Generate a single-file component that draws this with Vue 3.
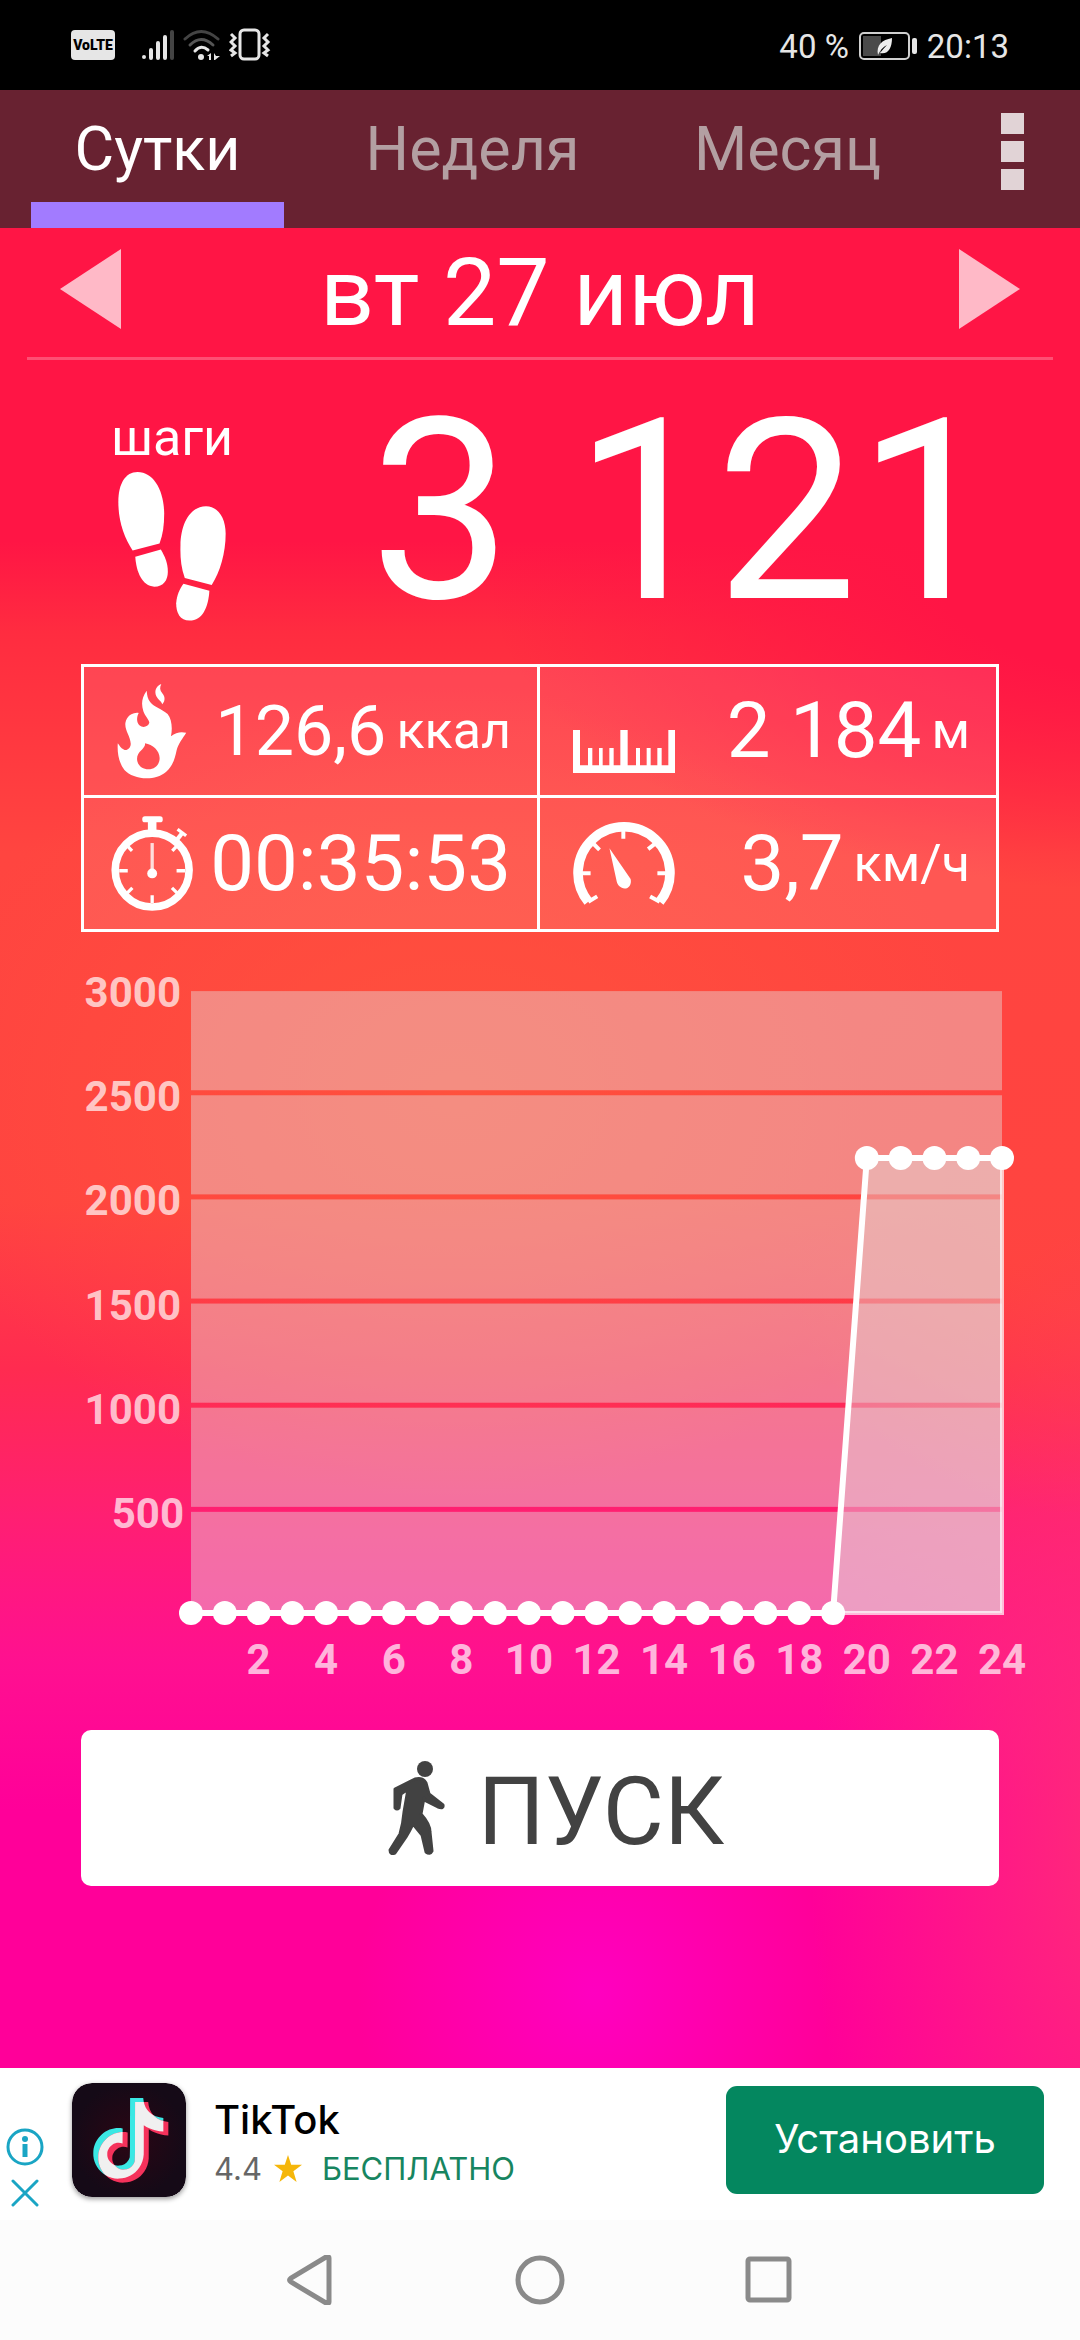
<script setup>
import { ref, computed } from 'vue'

const tabs = ['Сутки', 'Неделя', 'Месяц']
const active = ref(0)

const base = 681
const left = 191
const stepX = 811 / 24
const yOf = (v) => base - v * 0.2083
const xOf = (h) => left + h * stepX

const hours = Array.from({ length: 25 }, (_, h) => ({ h, v: h < 20 ? 0 : 2184 }))
const points = computed(() => hours.map((p) => ({ x: xOf(p.h), y: yOf(p.v) })))
const line = computed(() => points.value.map((p) => `${p.x},${p.y}`).join(' '))
const area = computed(() => `${xOf(19)},${base} ${points.value.slice(20).map((p) => `${p.x},${p.y}`).join(' ')} ${xOf(24)},${base}`)
const bands = [0, 500, 1000, 1500, 2000, 2500].map((v) => {
  const top = yOf(v + 500) + 3
  const bottom = v === 0 ? base : yOf(v) - 2
  return { v, top, height: bottom - top }
})
const yLabels = [500, 1000, 1500, 2000, 2500, 3000]
const xLabels = Array.from({ length: 12 }, (_, i) => (i + 1) * 2)
</script>

<template>
  <div class="phone">
    <div class="status">
      <div class="status-left">
        <span class="volte">VoLTE</span>
        <svg class="signal" viewBox="0 0 34 32" width="34" height="32">
          <g stroke="#e6e6e6" stroke-width="4" stroke-linecap="round">
            <path d="M3 28v0M10 21v8M17 14v15M24 8v21" />
            <path d="M31 3v26" stroke="#444" />
          </g>
        </svg>
        <svg class="wifi" viewBox="0 0 38 32" width="38" height="32">
          <g fill="none" stroke-width="3" stroke-linecap="round">
            <path d="M2 10Q18 -5 35 10" stroke="#444" />
            <path d="M7 16Q18 5 30 16" stroke="#555" />
            <path d="M12 22Q18 15 25 21" stroke="#e6e6e6" />
          </g>
          <circle cx="18" cy="28" r="3" fill="#e6e6e6" />
          <path d="M28 24v7h-2v-4h-2zM31 31v-7l2 3h4l-5 4z" fill="#e6e6e6" />
        </svg>
        <svg class="vibrate" viewBox="0 0 42 34" width="42" height="34">
          <g fill="none" stroke="#e6e6e6" stroke-width="3">
            <rect x="11" y="2" width="19" height="29" rx="4" />
            <path d="M2 6l4 4-4 4 4 4-4 4 4 3-4 3M39 6l-4 4 4 4-4 4 4 4-4 3 4 3" />
          </g>
        </svg>
      </div>
      <div class="status-right">
        <span>40 %</span>
        <svg viewBox="0 0 58 28" width="58" height="28">
          <rect x="1" y="1" width="49" height="26" rx="4" fill="none" stroke="#d0d0d0" stroke-width="2" />
          <rect x="4" y="4" width="18" height="20" fill="#4a4a4a" />
          <path d="M19 23C17 13 23 8 33 6C33 16 29 23 21 21Q25 16 28 13Q22 16 19 23Z" fill="#eee" />
          <rect x="53" y="6" width="5" height="16" rx="2" fill="#e6e6e6" />
        </svg>
        <span>20:13</span>
      </div>
    </div>

    <header class="bar">
      <nav class="tabs">
        <button v-for="(t, i) in tabs" :key="t" class="tab" :class="{ on: active === i }" @click="active = i">{{ t }}</button>
      </nav>
      <button class="menu" aria-label="Меню"><i></i><i></i><i></i></button>
    </header>

    <main class="body">
      <div class="date">
        <button class="arrow" aria-label="Назад"><svg viewBox="0 0 61 80" width="61" height="80"><path d="M61 0V80L0 40Z" /></svg></button>
        <h1>вт 27 июл</h1>
        <button class="arrow" aria-label="Вперёд"><svg viewBox="0 0 61 80" width="61" height="80"><path d="M0 0V80L61 40Z" /></svg></button>
      </div>

      <section class="steps">
        <div class="steps-label">
          <span>шаги</span>
          <svg viewBox="173 275 325 448" width="108" height="149" fill="#fff">
            <path d="M232 275C195 275 174 310 174 365C174 420 190 470 217 511L298 490C308 465 312 435 312 400C311 330 280 275 232 275Z" />
            <path d="M225 530L302 508C315 530 323 550 323 575C323 600 310 620 282 620C245 618 228 575 225 530Z" />
            <path d="M438 378C475 378 497 415 497 460C497 520 480 575 455 615L374 594C362 560 360 530 361 495C362 430 390 378 438 378Z" />
            <path d="M370 611L448 632C445 680 428 722 388 722C360 722 348 700 348 670C350 645 358 628 370 611Z" />
          </svg>
        </div>
        <strong class="count">3 121</strong>
      </section>

      <section class="stats">
        <div class="cell">
          <svg viewBox="180 105 206 286" width="84" height="95" fill="#fff">
            <path fill-rule="evenodd" d="M267 125C252 145 250 165 257 187C262 202 275 213 275 222C272 234 255 238 246 230C236 222 236 205 243 192C225 190 207 200 203 222C200 245 218 262 219 285C219 300 205 308 198 302C188 298 186 290 180 283C178 310 182 340 200 364C225 392 290 400 325 370C345 352 352 330 357 305C362 285 375 270 386 252C372 248 355 250 340 262C345 240 343 210 330 195C312 180 290 175 278 160C270 150 268 138 267 125ZM262 283C265 300 238 306 238 330C238 350 255 362 272 362C292 362 306 348 306 328C306 305 285 287 262 283Z" />
            <path d="M311 105C292 112 288 132 300 148C306 155 312 160 314 166C324 155 322 142 314 133C306 124 306 115 311 105Z" />
          </svg>
          <p><b class="mid">126,6</b><small>ккал</small></p>
        </div>
        <div class="cell wide">
          <svg viewBox="129 240 306 129" width="102" height="43" fill="#fff" class="ruler">
            <path d="M129 240H150V346H174V294H187V346H207V294H218V346H238V294H251V346H271V240H293V346H318V294H330V346H350V294H362V346H382V294H395V346H415V240H435V369H129Z" />
          </svg>
          <p><b>2 184</b><small>м</small></p>
        </div>
        <div class="cell">
          <svg viewBox="151 500 249 288" width="84" height="95" fill="none" stroke="#fff">
            <circle cx="276" cy="664" r="112" stroke-width="23" />
            <rect x="246" y="501" width="62" height="18" rx="8" fill="#fff" stroke="none" />
            <path d="M276 510V555" stroke-width="26" />
            <path d="M345 580L366 553" stroke-width="13" />
            <path d="M353 540L379 560" stroke-width="10" />
            <path d="M176 666H202M350 666H376M276 740V764M200 590L215 606M352 590L337 606M200 734L216 718M352 734L336 718" stroke-width="10" />
            <path d="M276 582V665" stroke-width="10" opacity=".8" />
            <circle cx="276" cy="674" r="15" fill="#fff" stroke="none" />
          </svg>
          <p><b>00:35:53</b></p>
        </div>
        <div class="cell wide">
          <svg viewBox="128 516 308 254" width="102" height="84" fill="none" stroke="#fff">
            <path d="M174 757A139 139 0 1 1 390 757" stroke-width="29" />
            <path d="M153 671H181M383 671H410M280 540V567M186 578L208 600M378 580L355 598M174 757L201 741M390 757L361 741" stroke-width="12" />
            <path d="M238 595L302 688C306 705 296 717 284 717C272 717 262 706 260 696Z" fill="#fff" stroke="none" />
          </svg>
          <p><b>3,7</b><small>км/ч</small></p>
        </div>
      </section>

      <svg class="chart" viewBox="0 0 1080 798">
        <rect v-for="b in bands" :key="b.v" :x="left" :y="b.top" width="811" :height="b.height" class="fill" />
        <polygon :points="area" class="fill" />
        <path :d="`M${xOf(24)} ${yOf(2184)}V${base}H${xOf(19)}`" class="edge" />
        <polyline :points="line" class="line" />
        <circle v-for="(p, i) in points" :key="i" :cx="p.x" :cy="p.y" r="12" fill="#fff" />
        <text v-for="v in yLabels" :key="'y' + v" :x="v === 500 ? 184 : 181" :y="yOf(v) + 19" text-anchor="end">{{ v }}</text>
        <text v-for="h in xLabels" :key="'x' + h" :x="xOf(h)" y="742" text-anchor="middle">{{ h }}</text>
      </svg>

      <button class="start">
        <svg viewBox="328 61 58 95" width="58" height="95" fill="#424242" stroke="#424242" stroke-linejoin="round">
          <circle cx="365" cy="69" r="8" stroke="none" />
          <path stroke-width="3" d="M355 79Q363 77 366 83L369 94L383 105Q384 109 378 107L366 101L364 98L361 114Q370 124 370 132L372 151Q370 155 366 152L362 135L353 124Q349 132 346 137L335 153Q330 155 330 150L340 134Q343 124 344 112L348 89L341 94L339 108Q337 110 335 108L335 89Z" />
        </svg>
        <span>ПУСК</span>
      </button>
    </main>

    <aside class="ad">
      <div class="ad-marks">
        <svg viewBox="0 0 38 38" width="38" height="38"><circle cx="19" cy="19" r="17" fill="none" stroke="#1aa5c4" stroke-width="3" /><circle cx="19" cy="11" r="3" fill="#1aa5c4" /><path d="M19 16V29" stroke="#1aa5c4" stroke-width="5" /></svg>
        <svg viewBox="0 0 28 28" width="28" height="28"><path d="M2 2L26 26M26 2L2 26" stroke="#1aa5c4" stroke-width="3" stroke-linecap="round" /></svg>
      </div>
      <svg class="app-icon" viewBox="0 0 114 114" width="114" height="114">
        <defs>
          <radialGradient id="g"><stop offset="0" stop-color="#2b0614" /><stop offset="1" stop-color="#150a17" /></radialGradient>
          <path id="note" d="M12.525.02c1.31-.02 2.61-.01 3.91-.02.08 1.53.63 3.09 1.75 4.17 1.12 1.11 2.7 1.62 4.24 1.79v4.03c-1.44-.05-2.89-.35-4.2-.97-.57-.26-1.1-.59-1.62-.93-.01 2.92.01 5.84-.02 8.75-.08 1.4-.54 2.79-1.35 3.94-1.31 1.92-3.58 3.17-5.91 3.21-1.43.08-2.86-.31-4.08-1.03-2.02-1.19-3.44-3.37-3.65-5.71-.02-.5-.03-1-.01-1.49.18-1.9 1.12-3.72 2.58-4.96 1.66-1.44 3.98-2.13 6.15-1.72.02 1.48-.04 2.96-.04 4.44-.99-.32-2.15-.23-3.02.37-.63.41-1.11 1.04-1.36 1.75-.21.51-.15 1.07-.14 1.61.24 1.64 1.82 3.02 3.5 2.87 1.12-.01 2.19-.66 2.77-1.61.19-.33.4-.67.41-1.06.1-1.79.06-3.57.07-5.36.01-4.03-.01-8.05.02-12.07z" />
          <clipPath id="overlap"><use href="#note" transform="translate(21 19) scale(3.36)" /></clipPath>
        </defs>
        <rect width="114" height="114" rx="20" fill="url(#g)" />
        <use href="#note" transform="translate(16 15) scale(3.36)" fill="#3be8e4" />
        <use href="#note" transform="translate(21 19) scale(3.36)" fill="#f5325b" />
        <g clip-path="url(#overlap)"><use href="#note" transform="translate(16 15) scale(3.36)" fill="#f0f0f0" /></g>
      </svg>
      <div class="ad-text">
        <span class="ad-title">TikTok</span>
        <span class="ad-sub">
          <span>4.4</span>
          <svg viewBox="0 0 26 26" width="28" height="28"><path d="M13 0L16 9H26L18 15L21 25L13 19L5 25L8 15L0 9H10Z" fill="#f5b60a" /></svg>
          <em>БЕСПЛАТНО</em>
        </span>
      </div>
      <a class="install" href="#">Установить</a>
    </aside>

    <nav class="sysnav">
      <button aria-label="Назад"><svg viewBox="0 0 50 50" width="50" height="50"><path d="M43 3V47Q43 49 40 48L5 27Q2 25 5 23L40 2Q43 1 43 3Z" /></svg></button>
      <button aria-label="Домой"><svg viewBox="0 0 50 50" width="50" height="50"><circle cx="25" cy="25" r="22" /></svg></button>
      <button aria-label="Обзор"><svg viewBox="0 0 50 50" width="50" height="50"><rect x="4" y="4" width="41" height="41" rx="2" /></svg></button>
    </nav>
  </div>
</template>

<style>
body {
  margin: 0;
  background: #fcfcfc;
}
</style>

<style scoped>
.phone {
  min-height: 100vh;
  display: flex;
  flex-direction: column;
  font-family: Roboto, "Noto Sans", sans-serif;
  color: #fff;
}
button {
  border: 0;
  padding: 0;
  margin: 0;
  background: none;
  font: inherit;
  color: inherit;
}
svg {
  flex: none;
}
.status {
  height: 90px;
  background: #000;
  display: flex;
  justify-content: space-between;
  align-items: center;
  padding: 0 71px;
  color: #e6e6e6;
}
.status-left,
.status-right {
  display: flex;
  align-items: center;
}
.status-right {
  gap: 10px;
  padding-top: 2px;
  font-size: 33px;
}
.volte {
  width: 44px;
  line-height: 30px;
  border-radius: 4px;
  background: #e6e6e6;
  color: #000;
  font-size: 14px;
  font-weight: 900;
  text-align: center;
  margin-right: 26px;
}
.wifi {
  margin: 0 8px;
}
.bar {
  height: 138px;
  background: #682231;
  display: flex;
}
.tabs {
  flex: 7;
  display: grid;
  grid-template-columns: repeat(3, 1fr);
}
.tab {
  box-sizing: border-box;
  height: 138px;
  margin: 0 31px;
  padding-top: 6px;
  border-bottom: 26px solid transparent;
  font-size: 61px;
  line-height: 106px;
  color: #b39fa2;
}
.tab.on {
  color: #fff;
  border-bottom-color: #a27bff;
}
.menu {
  flex: 1;
  display: flex;
  flex-direction: column;
  align-items: center;
  gap: 7px;
  padding-top: 23px;
}
.menu i {
  width: 23px;
  height: 21px;
  background: #e1d3d6;
}
.body {
  flex: 1;
  display: flex;
  flex-direction: column;
  background:
    radial-gradient(ellipse 22% 13% at 55% 96%, rgba(255, 0, 196, 0.9) 0%, rgba(255, 0, 170, 0) 100%),
    radial-gradient(ellipse 30% 34% at 105% 88%, rgba(255, 50, 115, 0.9) 0%, rgba(255, 40, 115, 0) 100%),
    radial-gradient(ellipse 60% 17% at 105% 19%, #ff1545 30%, rgba(255, 21, 69, 0) 100%),
    radial-gradient(ellipse 30% 16% at 102% 54%, rgba(255, 68, 64, 0.9) 30%, rgba(255, 60, 64, 0) 100%),
    radial-gradient(ellipse 50% 22% at 42% 47%, rgba(255, 84, 60, 0.8) 0%, rgba(255, 80, 60, 0) 100%),
    linear-gradient(#ff1545 17%, #ff2c40 22%, #ff4540 34%, #ff4340 53%, #ff2b50 62%, #ff1f72 70%, #ff1090 78%, #ff0099 86%, #ff0099 100%);
}
.date {
  height: 129px;
  margin: 0 27px;
  border-bottom: 3px solid rgba(255, 255, 255, 0.25);
  display: flex;
  align-items: center;
  justify-content: space-between;
  padding: 0 33px;
}
.date h1 {
  margin: 0;
  font-weight: 400;
  font-size: 95px;
  line-height: 122px;
}
.arrow {
  display: flex;
  padding-bottom: 8px;
}
.arrow svg {
  fill: rgba(255, 255, 255, 0.7);
}
.steps {
  height: 304px;
  margin: 0 81px;
  display: flex;
  justify-content: space-between;
  align-items: center;
}
.steps-label {
  width: 182px;
  display: flex;
  flex-direction: column;
  align-items: center;
  gap: 4px;
  padding-top: 5px;
}
.steps-label span {
  font-size: 52px;
  line-height: 60px;
}
.count {
  font-weight: 400;
  font-size: 252px;
  line-height: 304px;
}
.stats {
  margin: 0 81px;
  border: 3px solid #fff;
  display: grid;
  grid-template-columns: 1fr 1fr;
  background: rgba(255, 255, 255, 0.1);
}
.cell {
  box-sizing: border-box;
  height: 131px;
  padding: 0 26px;
  display: flex;
  align-items: center;
  justify-content: space-between;
  border-right: 3px solid #fff;
  border-bottom: 3px solid #fff;
}
.cell.wide {
  padding-left: 33px;
  border-right: 0;
}
.cell:nth-child(n + 3) {
  border-bottom: 0;
}
.cell p {
  margin: 0;
  display: flex;
  align-items: center;
  gap: 10px;
}
.cell b {
  font-weight: 400;
  font-size: 78px;
  line-height: 80px;
}
.cell .mid {
  font-size: 70px;
}
.cell small {
  font-size: 52px;
  line-height: 54px;
}
.ruler {
  margin-top: 40px;
}
.chart {
  display: block;
  width: 100%;
}
.chart text {
  font-size: 42px;
  font-weight: 700;
  fill: rgba(255, 255, 255, 0.7);
}
.fill {
  fill: rgba(228, 228, 228, 0.41);
}
.edge {
  fill: none;
  stroke: rgba(255, 255, 255, 0.7);
  stroke-width: 4;
}
.line {
  fill: none;
  stroke: #fff;
  stroke-width: 6;
}
.start {
  margin: 0 81px 182px;
  height: 156px;
  border-radius: 10px;
  background: #fff;
  color: #424242;
  display: flex;
  align-items: center;
  justify-content: center;
  gap: 32px;
  font-size: 94px;
  padding-left: 32px;
}
.start span {
  padding-top: 8px;
}
.ad {
  height: 152px;
  background: #fff;
  display: flex;
  padding: 0 36px 0 6px;
  font-family: Inter, "Noto Sans", sans-serif;
}
.ad-marks {
  width: 38px;
  display: flex;
  flex-direction: column;
  align-items: center;
  gap: 13px;
  padding-top: 60px;
  margin-right: 28px;
}
.app-icon {
  margin-top: 15px;
  border-radius: 20px;
  box-shadow: 0 2px 5px rgba(0, 0, 0, 0.4);
}
.ad-text {
  flex: 1;
  margin-left: 28px;
  display: flex;
  flex-direction: column;
  padding-top: 28px;
}
.ad-title {
  color: #000;
  font-size: 40px;
  font-weight: 500;
  line-height: 48px;
}
.ad-sub {
  display: flex;
  align-items: center;
  color: #666;
  font-size: 31px;
  line-height: 50px;
  gap: 12px;
}
.ad-sub em {
  font-style: normal;
  color: #178560;
  margin-left: 8px;
}
.install {
  margin-top: 18px;
  width: 318px;
  height: 108px;
  border-radius: 11px;
  background: #04875f;
  color: #fff;
  text-decoration: none;
  text-align: center;
  font-size: 40px;
  line-height: 106px;
}
.sysnav {
  height: 120px;
  background: #fcfcfc;
  display: flex;
  justify-content: center;
  align-items: center;
  gap: 179px;
}
.sysnav button {
  display: flex;
}
.sysnav svg {
  fill: none;
  stroke: #8a8a8a;
  stroke-width: 5;
}
</style>
